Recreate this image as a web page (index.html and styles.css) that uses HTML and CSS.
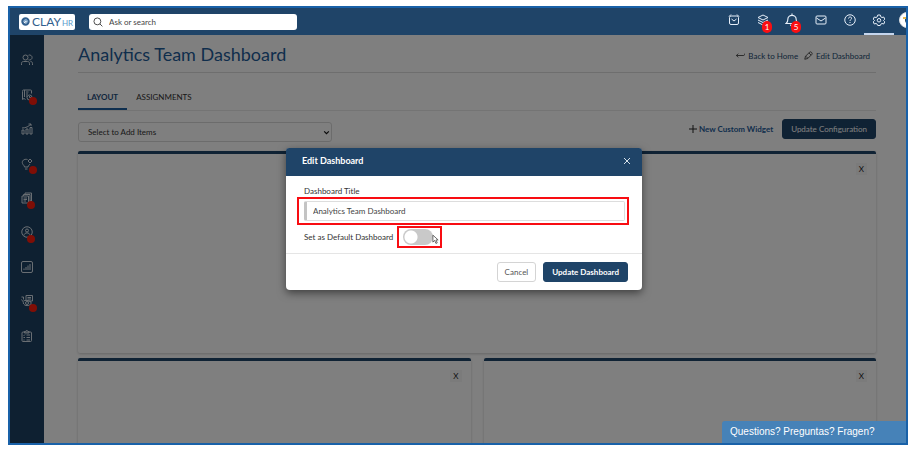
FILE: index.html
```html
<!DOCTYPE html>
<html lang="en">
<head>
<meta charset="utf-8">
<meta name="viewport" content="width=device-width, initial-scale=1">
<title>Analytics Team Dashboard</title>
<link rel="stylesheet" href="styles.css">
</head>
<body>
<div class="frame">
  <header class="topbar">
    <a class="logo" href="#" aria-label="Clay HR">
      <svg class="logo-mark" viewBox="0 0 16 16"><circle cx="8" cy="8" r="5.5" fill="none" stroke="#315f8e" stroke-width="4"/><path d="M4 7l5-4 4 4-3 5z" fill="#7fa6c9"/><path d="M7 7l3 0-1 3z" fill="#fff"/></svg>
      <span class="logo-name">CLAY</span><span class="logo-sub">HR</span>
    </a>
    <label class="search">
      <svg class="search-icon" viewBox="0 0 16 16"><circle cx="7" cy="7" r="5.5"/><path d="M11 11l4 4"/></svg>
      <input class="search-input" type="search" placeholder="Ask or search" aria-label="Ask or search">
    </label>
    <nav class="tools" aria-label="Tools">
      <a class="tool" href="#" aria-label="Reminders"><svg class="icon" viewBox="0 0 24 24"><rect x="3" y="4" width="18" height="17" rx="3"/><path d="M2 5l4-4M22 5l-4-4M7 10l5 4 5-4"/></svg></a>
      <a class="tool" href="#" aria-label="Queue"><svg class="icon" viewBox="0 0 24 24"><path d="M12 2l10 5-10 5L2 7z"/><path d="M2 12l10 5 10-5M2 17l10 5 10-5"/></svg><span class="badge">1</span></a>
      <a class="tool" href="#" aria-label="Notifications"><svg class="icon icon-bell" viewBox="0 0 24 24"><path d="M12 1v3M2 18h20c-3-2-3-5-3-8a7 6 0 0 0-14 0c0 3 0 6-3 8zM9 20c1 3 5 3 6 0"/></svg><span class="badge">5</span></a>
      <a class="tool" href="#" aria-label="Messages"><svg class="icon" viewBox="0 0 24 24"><rect x="2" y="4" width="20" height="16" rx="2"/><path d="M3 8l9 6 9-6"/></svg></a>
      <a class="tool" href="#" aria-label="Help"><svg class="icon" viewBox="0 0 24 24"><circle cx="12" cy="12" r="10.5"/><path d="M9 9c0-4 7-4 6 0 0 2-3 2-3 5M12 16v2"/></svg></a>
      <a class="tool tool-active" href="#" aria-label="Settings"><svg class="icon" viewBox="0 0 24 24"><path d="M9.500 2h5l1 3.500 2.500 1.500 3.500-1 2 4.500-2.500 2.500 2.500 2.500-2 4.500-3.500-1-2.500 1.500-1 2.500h-5l-1-2.500-2.500-1.500-3.500 1-2-4.500L3 13 .5 10.500l2-4.500 3.500 1 2.500-1.500z"/><circle cx="12" cy="12.500" r="3.500"/></svg></a>
      <a class="avatar" href="#" aria-label="Profile"><svg viewBox="0 0 16 16"><circle cx="8" cy="8" r="7.500" fill="#fff" stroke="#d9dde0"/><circle cx="11" cy="8" r="5" fill="#17334a"/><path d="M4 5h3v2H4z" fill="#e5b94e"/></svg></a>
    </nav>
  </header>

  <div class="workspace">
    <nav class="sidebar" aria-label="Main">
      <div class="side-list">
        <a class="side" href="#" aria-label="People"><svg class="icon" viewBox="0 0 24 24"><circle cx="9" cy="7" r="5"/><path d="M15 2.500a5 5 0 1 1 0 9M1 22v-3c0-3 2-4 4-4h8c3 0 4 2 4 4v3M19 15c3 0 4 2 4 4v3"/></svg></a>
        <a class="side" href="#" aria-label="Payroll"><svg class="icon" viewBox="0 0 24 24"><path d="M21 9V4c0-2-1-2-2-2H5C3 2 3 3 3 5v16l3-2 3 2M7 2v14M10 6h5M10 10h4M10 14h2"/><circle cx="17" cy="17" r="5"/><path d="M17 14v3h3"/></svg><span class="dot"></span></a>
        <a class="side" href="#" aria-label="Performance"><svg class="icon" viewBox="0 0 24 24"><path d="M2 14h4v8H2zM10 12h4v10h-4zM18 9h4v13h-4zM2 10c8 0 13-3 18-8M15 2h5v4"/></svg></a>
        <a class="side" href="#" aria-label="Ideas"><svg class="icon" viewBox="0 0 24 24"><path d="M13 3C6 1 1 6 3 11c1 3 4 4 4 7h7c0-3 3-4 4-6M8 22h5"/><path d="M18 2l4 4-4 4-4-4z"/></svg><span class="dot"></span></a>
        <a class="side" href="#" aria-label="Documents"><svg class="icon" viewBox="0 0 24 24"><path d="M8 5V2h13v16h-3M5 8V5h13v16M2 8h13v14H2zM5 12h7M5 15h7M5 18h5"/></svg><span class="dot dot-near"></span></a>
        <a class="side" href="#" aria-label="Profile"><svg class="icon" viewBox="0 0 24 24"><circle cx="12" cy="12" r="10.500"/><circle cx="12" cy="9" r="3"/><path d="M6 19c0-7 12-7 12 0"/></svg><span class="dot dot-near"></span></a>
        <a class="side" href="#" aria-label="Reports"><svg class="icon" viewBox="0 0 24 24"><rect x="1" y="1" width="22" height="22" rx="3"/><path d="M6 18v-3M10 18v-6M14 18V9M18 18V6"/></svg></a>
        <a class="side" href="#" aria-label="Surveys"><svg class="icon" viewBox="0 0 24 24"><path d="M10 1h13v11H10zM13 5h7M13 8h7M1 4h4v5M1 9c3 4 4 5 4 9M5 12c3-2 10-2 15 2v3c-2 4-9 6-14 2M19 18l3 3"/><circle cx="12" cy="16" r="3"/></svg><span class="dot"></span></a>
        <a class="side" href="#" aria-label="Tasks"><svg class="icon" viewBox="0 0 24 24"><rect x="2" y="4" width="19" height="19" rx="2"/><path d="M7 6V3h2c1-3 4-3 5 0h2v3zM5 10l1 1 2-2M11 10h7M5 15l1 1 2-2M11 15h7M5 20h2M11 20h7"/></svg></a>
      </div>
    </nav>

    <main class="content">
      <div class="page-head">
        <h1 class="title">Analytics Team Dashboard</h1>
        <div class="page-links">
          <a class="page-link" href="#"><svg class="link-icon" viewBox="0 0 24 24"><path d="M6 7l-5 5 5 5M1 12h19c3 0 3-2 3-5"/></svg>Back to Home</a>
          <a class="page-link" href="#"><svg class="link-icon" viewBox="0 0 24 24"><path d="M2 22l2-8L15 3c3-3 9 3 6 6L10 20zM13 5l6 6M5 14l5 5"/></svg>Edit Dashboard</a>
        </div>
      </div>
      <nav class="tabs" aria-label="Dashboard sections">
        <a class="tab tab-active" href="#">LAYOUT</a>
        <a class="tab" href="#">ASSIGNMENTS</a>
      </nav>
      <div class="toolbar">
        <div class="picker-wrap">
          <select class="picker" aria-label="Select to Add Items"><option>Select to Add Items</option></select>
          <svg class="chevron" viewBox="0 0 6 4"><path d="M1 1l2 2 2-2"/></svg>
        </div>
        <div class="actions">
          <a class="new-widget" href="#"><svg class="plus" viewBox="0 0 8 8"><path d="M4 0v8M0 4h8"/></svg>New Custom Widget</a>
          <button class="btn btn-primary" type="button">Update Configuration</button>
        </div>
      </div>
      <div class="widgets">
        <section class="widget widget-wide"><button class="remove" type="button" aria-label="Remove widget">X</button></section>
        <section class="widget"><button class="remove" type="button" aria-label="Remove widget">X</button></section>
        <section class="widget"><button class="remove" type="button" aria-label="Remove widget">X</button></section>
      </div>
    </main>
    <div class="backdrop"></div>
  </div>

  <form class="modal" role="dialog" aria-labelledby="modal-title">
    <div class="modal-head">
      <h2 class="modal-title" id="modal-title">Edit Dashboard</h2>
      <button class="close" type="button" aria-label="Close"><svg viewBox="0 0 8 8"><path d="M1 1l6 6M7 1L1 7"/></svg></button>
    </div>
    <div class="modal-body">
      <label class="label" for="dash-title">Dashboard Title</label>
      <div class="mark mark-title"><input class="text-input" id="dash-title" type="text" value="Analytics Team Dashboard"></div>
      <div class="default-row">
        <label class="label" for="dash-default">Set as Default Dashboard</label>
        <div class="mark mark-toggle">
          <input class="toggle" id="dash-default" type="checkbox">
          <svg class="cursor" viewBox="0 0 8 12"><path d="M1 1v8l2-2 1.500 3.500 1.500-.7L4.500 6.500H7z"/></svg>
        </div>
      </div>
    </div>
    <div class="modal-foot">
      <button class="btn btn-plain" type="button">Cancel</button>
      <button class="btn btn-primary btn-strong" type="submit">Update Dashboard</button>
    </div>
  </form>
  <button class="chat" type="button">Questions? Preguntas? Fragen?</button>
</div>
</body>
</html>
```
FILE: styles.css
```css
* { box-sizing: border-box; }

body {
  margin: 0;
  padding: 6px 6px 6px 8px;
  background: #fff;
  color: #333;
  font: 8px/12px Lato, "Liberation Sans", sans-serif;
}

a { color: inherit; text-decoration: none; }
button, input, select { font: inherit; }
svg { display: block; fill: none; }

.frame {
  position: relative;
  display: flex;
  flex-direction: column;
  height: calc(100vh - 12px);
  border: 2px solid #1961a8;
  overflow: hidden;
}

.topbar {
  display: flex;
  align-items: center;
  flex: none;
  height: 27px;
  padding-left: 9px;
  background: #1f4468;
}

.logo {
  display: flex;
  align-items: center;
  gap: 1px;
  height: 16px;
  width: 56px;
  padding: 0 2px;
  border-radius: 2px;
  background: #fff;
  color: #315f8e;
}
.logo-mark { width: 9px; height: 9px; flex: none; }
.logo-name { padding-left: 1px; font-size: 12px; }
.logo-sub { padding-top: 3px; color: #5b9bcb; }

.search {
  display: flex;
  align-items: center;
  gap: 6px;
  width: 208px;
  height: 16px;
  margin-left: 14px;
  padding-left: 4px;
  border-radius: 3px;
  background: #fff;
}
.search-icon { width: 10px; height: 10px; flex: none; stroke: #444; stroke-width: 1.5; }
.search-input { flex: 1; min-width: 0; padding: 0; border: 0; outline: 0; background: none; }
.search-input::placeholder { color: #444; opacity: 1; }

.tools { display: flex; height: 27px; margin-left: auto; }
.tool {
  position: relative;
  display: flex;
  align-items: center;
  justify-content: center;
  width: 29px;
  padding-bottom: 2px;
  border-bottom: 2px solid transparent;
}
.tool-active { width: 30px; border-color: #c5d6ee; }
.icon { width: 12px; height: 12px; stroke: #e6eef8; stroke-width: 2; }
.icon-bell { width: 14px; height: 14px; }
.badge {
  position: absolute;
  left: 14px;
  top: 13px;
  width: 10px;
  height: 12px;
  border-radius: 5px;
  background: #fb0f12;
  color: #fff;
  text-align: center;
}
.avatar { width: 12px; padding-top: 4px; padding-left: 5px; overflow: hidden; }
.avatar svg { width: 16px; height: 16px; }

.workspace { position: relative; display: flex; flex: 1; min-height: 0; }
.backdrop { position: absolute; inset: 0; background: rgba(0, 0, 0, .5); }

.sidebar { flex: none; width: 34px; padding-top: 8px; background: #1d4163; }
.side-list { display: flex; flex-direction: column; height: 310px; }
.side { position: relative; display: flex; flex: 1; align-items: center; justify-content: center; }
.sidebar .icon { stroke: #d3dde6; }
.dot {
  position: absolute;
  left: 19px;
  top: 20px;
  width: 8px;
  height: 8px;
  border-radius: 50%;
  background: #ff1c0c;
}
.dot-near { left: 17px; }

.content { flex: 1; min-width: 0; padding: 0 30px 0 34px; background: #fff; }

.page-head {
  display: flex;
  align-items: center;
  justify-content: space-between;
  height: 38px;
  padding-right: 6px;
  border-bottom: 1px solid #dcdcdc;
}
.title { margin: 0; color: #1f5c99; font-size: 18px; line-height: 24px; font-weight: 400; }
.page-links { display: flex; gap: 6px; padding-top: 4px; }
.page-link { display: flex; align-items: center; gap: 3px; color: #234a70; }
.link-icon { width: 9px; height: 9px; stroke: #222; stroke-width: 2; }

.tabs { display: flex; margin-top: 14px; border-bottom: 1px solid #e8e8e8; }
.tab { padding: 4px 9px 5px; border-bottom: 2px solid transparent; }
.tab-active { border-color: #1f5f9f; color: #1f4e7c; font-weight: 700; }

.toolbar { display: flex; align-items: flex-start; justify-content: space-between; margin-top: 8px; }
.picker-wrap { position: relative; width: 254px; margin-top: 3px; }
.picker {
  appearance: none;
  display: block;
  width: 100%;
  height: 20px;
  padding: 0 9px;
  border: 1px solid #d8d8d8;
  border-radius: 3px;
  background: #fff;
  color: #333;
}
.chevron { position: absolute; right: 2px; top: 8px; width: 7px; height: 5px; stroke: #111; pointer-events: none; }
.actions { display: flex; align-items: center; gap: 9px; }
.new-widget { display: flex; align-items: center; gap: 2px; color: #1f5c99; font-weight: 700; }
.plus { width: 8px; height: 8px; stroke: #222; }

.btn { height: 20px; padding: 0 7px; border: 1px solid #d4d4d4; border-radius: 3px; white-space: nowrap; }
.btn-primary { padding: 0 8px; border-color: #1f4468; background: #1f4468; color: #fff; }
.btn-plain { background: #fff; color: #555; }
.btn-strong { font-weight: 700; }

.widgets { display: grid; grid-template-columns: 1fr 1fr; gap: 5px 13px; margin-top: 9px; }
.widget {
  display: flex;
  align-items: flex-start;
  justify-content: flex-end;
  height: 202px;
  padding: 9px;
  border-top: 3px solid #1f4468;
  border-radius: 2px;
  box-shadow: 0 1px 3px rgba(0, 0, 0, .2);
}
.widget-wide { grid-column: 1 / -1; }
.remove { padding: 0 3px; border: 0; background: #f7f7f7; color: #222; }

.modal {
  position: absolute;
  top: 140px;
  left: 12px;
  right: 0;
  width: 356px;
  margin: 0 auto;
  border-radius: 4px;
  background: #fff;
  box-shadow: 0 3px 9px rgba(0, 0, 0, .5);
}
.modal-head {
  display: flex;
  align-items: center;
  justify-content: space-between;
  height: 28px;
  padding: 0 11px 2px 16px;
  border-radius: 3px 3px 0 0;
  background: #1f4468;
  color: #fff;
}
.modal-title { margin: 0; font-size: 9px; line-height: 12px; font-weight: 700; }
.close { padding: 0; border: 0; background: none; }
.close svg { width: 8px; height: 8px; stroke: #d5e0ea; }

.modal-body { padding: 9px 13px 5px 11px; }
.label { display: block; padding-left: 7px; color: #333; }
.mark { border: 2px solid #f80d12; }
.mark-title { padding: 2px 2px 2px 5px; }
.text-input {
  display: block;
  width: 100%;
  height: 20px;
  padding: 0 6px;
  border: 1px solid #ddd;
  border-left: 3px solid #c4c4c4;
  border-radius: 2px;
  color: #444;
}
.default-row { display: flex; align-items: center; gap: 4px; }
.mark-toggle { position: relative; width: 45px; height: 22px; margin-top: 1px; padding: 1px 4px; }
.toggle {
  appearance: none;
  display: block;
  width: 30px;
  height: 16px;
  margin: 0;
  border-radius: 8px;
  background: radial-gradient(circle at 8px 8px, #fff 6px, #c9c9c9 7px);
}
.cursor { position: absolute; right: 1px; bottom: 1px; width: 7px; height: 11px; stroke: #555; fill: #fff; }

.modal-foot {
  display: flex;
  justify-content: flex-end;
  gap: 7px;
  padding: 8px 14px;
  border-top: 1px solid #e5e5e5;
}

.chat {
  position: absolute;
  right: 0;
  bottom: 0;
  width: 184px;
  height: 22px;
  padding: 0 8px;
  border: 0;
  border-radius: 3px 0 0 0;
  background: #4682b8;
  color: #fff;
  font: 10px/12px "Liberation Sans", sans-serif;
  text-align: left;
}
```
